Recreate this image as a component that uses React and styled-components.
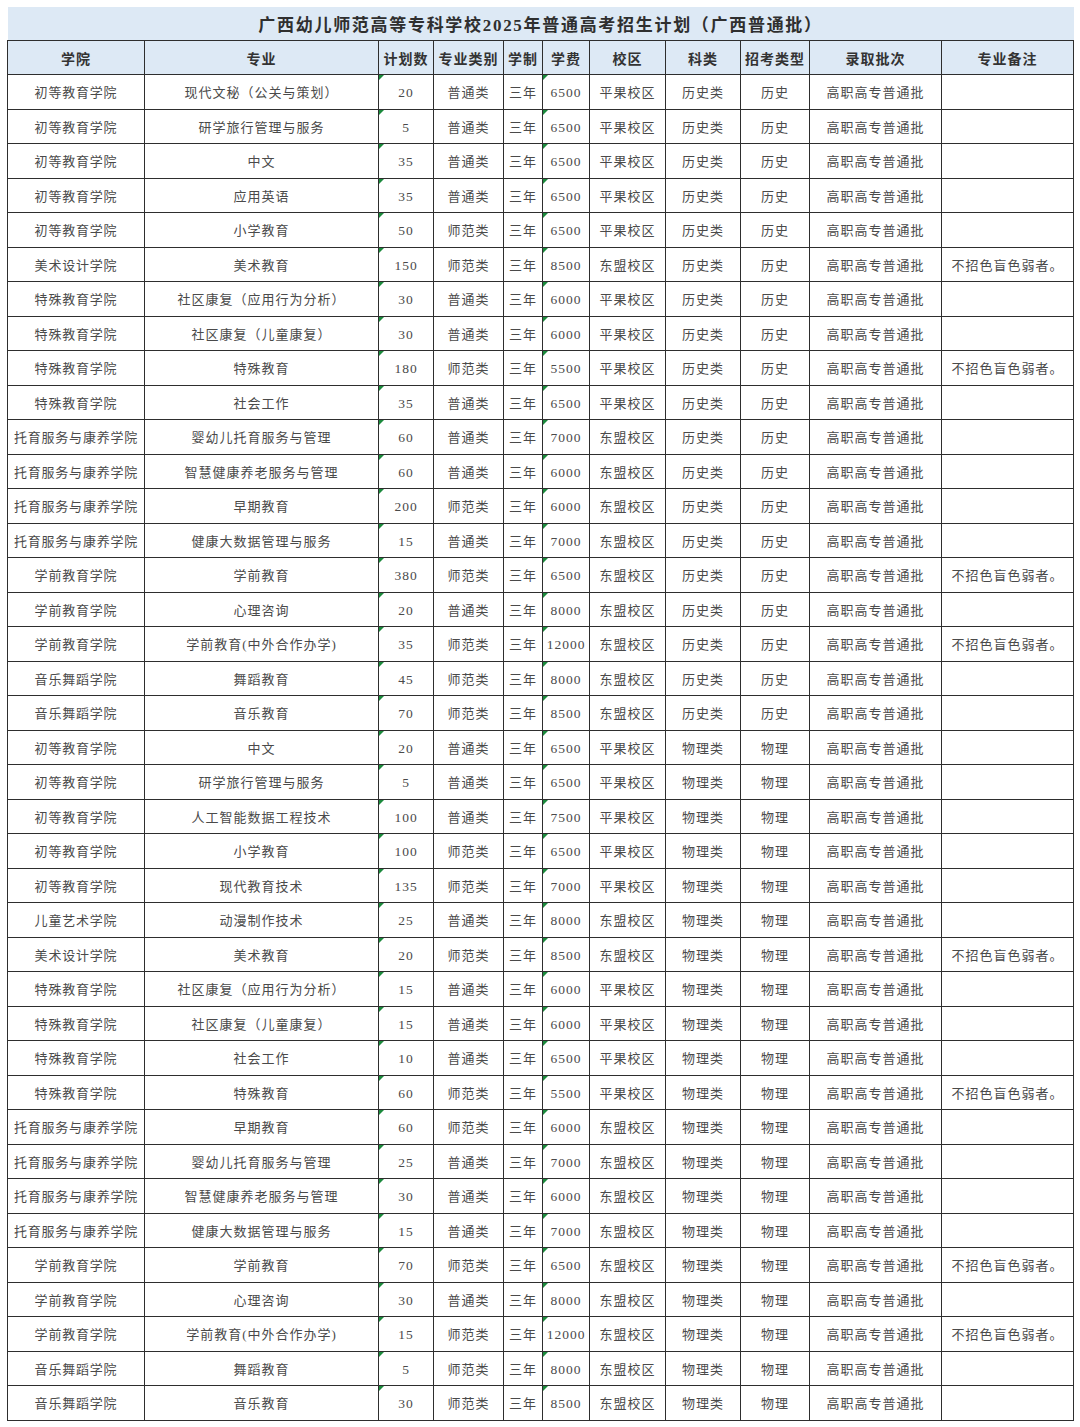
import React from "react";
import styled, { createGlobalStyle } from "styled-components";

const GlobalStyle = createGlobalStyle`
  body {
    margin: 0;
    padding: 7px 7px 0 7px;
    background: #fff;
    font-family: "Liberation Serif", "Noto Sans CJK SC", serif;
  }
`;

const columns = [
  { key: "college", label: "学院", width: 137 },
  { key: "major", label: "专业", width: 234 },
  { key: "plan", label: "计划数", width: 55, marked: true },
  { key: "kind", label: "专业类别", width: 70 },
  { key: "years", label: "学制", width: 39 },
  { key: "fee", label: "学费", width: 47, marked: true },
  { key: "campus", label: "校区", width: 76 },
  { key: "subject", label: "科类", width: 75 },
  { key: "exam", label: "招考类型", width: 69 },
  { key: "batch", label: "录取批次", width: 132 },
  { key: "note", label: "专业备注", width: 132 },
];

const NOTE = "不招色盲色弱者。";

// college, major, plan, kind, fee, campus, note
const raw = [
  ["初等教育学院", "现代文秘（公关与策划）", "20", "普通类", "6500", "平果校区"],
  ["初等教育学院", "研学旅行管理与服务", "5", "普通类", "6500", "平果校区"],
  ["初等教育学院", "中文", "35", "普通类", "6500", "平果校区"],
  ["初等教育学院", "应用英语", "35", "普通类", "6500", "平果校区"],
  ["初等教育学院", "小学教育", "50", "师范类", "6500", "平果校区"],
  ["美术设计学院", "美术教育", "150", "师范类", "8500", "东盟校区", NOTE],
  ["特殊教育学院", "社区康复（应用行为分析）", "30", "普通类", "6000", "平果校区"],
  ["特殊教育学院", "社区康复（儿童康复）", "30", "普通类", "6000", "平果校区"],
  ["特殊教育学院", "特殊教育", "180", "师范类", "5500", "平果校区", NOTE],
  ["特殊教育学院", "社会工作", "35", "普通类", "6500", "平果校区"],
  ["托育服务与康养学院", "婴幼儿托育服务与管理", "60", "普通类", "7000", "东盟校区"],
  ["托育服务与康养学院", "智慧健康养老服务与管理", "60", "普通类", "6000", "东盟校区"],
  ["托育服务与康养学院", "早期教育", "200", "师范类", "6000", "东盟校区"],
  ["托育服务与康养学院", "健康大数据管理与服务", "15", "普通类", "7000", "东盟校区"],
  ["学前教育学院", "学前教育", "380", "师范类", "6500", "东盟校区", NOTE],
  ["学前教育学院", "心理咨询", "20", "普通类", "8000", "东盟校区"],
  ["学前教育学院", "学前教育(中外合作办学)", "35", "师范类", "12000", "东盟校区", NOTE],
  ["音乐舞蹈学院", "舞蹈教育", "45", "师范类", "8000", "东盟校区"],
  ["音乐舞蹈学院", "音乐教育", "70", "师范类", "8500", "东盟校区"],
];

const rawPhysics = [
  ["初等教育学院", "中文", "20", "普通类", "6500", "平果校区"],
  ["初等教育学院", "研学旅行管理与服务", "5", "普通类", "6500", "平果校区"],
  ["初等教育学院", "人工智能数据工程技术", "100", "普通类", "7500", "平果校区"],
  ["初等教育学院", "小学教育", "100", "师范类", "6500", "平果校区"],
  ["初等教育学院", "现代教育技术", "135", "师范类", "7000", "平果校区"],
  ["儿童艺术学院", "动漫制作技术", "25", "普通类", "8000", "东盟校区"],
  ["美术设计学院", "美术教育", "20", "师范类", "8500", "东盟校区", NOTE],
  ["特殊教育学院", "社区康复（应用行为分析）", "15", "普通类", "6000", "平果校区"],
  ["特殊教育学院", "社区康复（儿童康复）", "15", "普通类", "6000", "平果校区"],
  ["特殊教育学院", "社会工作", "10", "普通类", "6500", "平果校区"],
  ["特殊教育学院", "特殊教育", "60", "师范类", "5500", "平果校区", NOTE],
  ["托育服务与康养学院", "早期教育", "60", "师范类", "6000", "东盟校区"],
  ["托育服务与康养学院", "婴幼儿托育服务与管理", "25", "普通类", "7000", "东盟校区"],
  ["托育服务与康养学院", "智慧健康养老服务与管理", "30", "普通类", "6000", "东盟校区"],
  ["托育服务与康养学院", "健康大数据管理与服务", "15", "普通类", "7000", "东盟校区"],
  ["学前教育学院", "学前教育", "70", "师范类", "6500", "东盟校区", NOTE],
  ["学前教育学院", "心理咨询", "30", "普通类", "8000", "东盟校区"],
  ["学前教育学院", "学前教育(中外合作办学)", "15", "师范类", "12000", "东盟校区", NOTE],
  ["音乐舞蹈学院", "舞蹈教育", "5", "师范类", "8000", "东盟校区"],
  ["音乐舞蹈学院", "音乐教育", "30", "师范类", "8500", "东盟校区"],
];

const toRow = (subject, exam) => ([college, major, plan, kind, fee, campus, note]) => ({
  college,
  major,
  plan,
  kind,
  years: "三年",
  fee,
  campus,
  subject,
  exam,
  batch: "高职高专普通批",
  note: note || "",
});

const rows = [
  ...raw.map(toRow("历史类", "历史")),
  ...rawPhysics.map(toRow("物理类", "物理")),
];

const App = () => {
  return (
    <>
      <GlobalStyle />
      <Sheet>
        <colgroup>
          {columns.map((c) => (
            <col key={c.key} style={{ width: c.width }} />
          ))}
        </colgroup>
        <thead>
          <tr>
            <TitleCell colSpan={columns.length}>
              广西幼儿师范高等专科学校2025年普通高考招生计划（广西普通批）
            </TitleCell>
          </tr>
          <tr>
            {columns.map((c) => (
              <HeadCell key={c.key}>{c.label}</HeadCell>
            ))}
          </tr>
        </thead>
        <tbody>
          {rows.map((r, i) => (
            <tr key={i}>
              {columns.map((c) => (
                <Cell key={c.key} $marked={c.marked} $tight={c.key === "college"}>
                  {r[c.key]}
                </Cell>
              ))}
            </tr>
          ))}
        </tbody>
      </Sheet>
    </>
  );
};

const Sheet = styled.table`
  width: 1066px;
  table-layout: fixed;
  border-collapse: collapse;
  border-bottom: 1px solid #2e2e2e;
`;

const TitleCell = styled.th`
  height: 33px;
  padding: 0;
  background: #dde9f5;
  color: #2f2f2f;
  font-size: 17px;
  font-weight: 700;
  letter-spacing: 1.7px;
  text-align: center;
  border-bottom: 1px solid #2e2e2e;
`;

const HeadCell = styled.th`
  height: 33px;
  padding: 0;
  background: #dde9f5;
  border: 1px solid #2e2e2e;
  color: #333;
  font-size: 14px;
  font-weight: 700;
  letter-spacing: 1px;
  text-align: center;
  white-space: nowrap;
`;

/* numeric cells carry the green "number stored as text" marker */
const Cell = styled.td`
  position: relative;
  height: ${({ $marked }) => ($marked ? "30.5px" : "33.5px")};
  padding: ${({ $marked }) => ($marked ? "3px 0 0" : "0")};
  border: 1px solid #2e2e2e;
  color: #4a4a4a;
  font-size: ${({ $marked }) => ($marked ? "13.5px" : "13px")};
  letter-spacing: ${({ $tight }) => ($tight ? "0.8px" : "1px")};
  text-align: center;
  white-space: nowrap;
  overflow: hidden;

  &::before {
    content: "";
    display: ${({ $marked }) => ($marked ? "block" : "none")};
    position: absolute;
    top: 0;
    left: 0;
    width: 0;
    height: 0;
    border-top: 5px solid #1b8a3c;
    border-right: 5px solid transparent;
  }
`;

export default App;
